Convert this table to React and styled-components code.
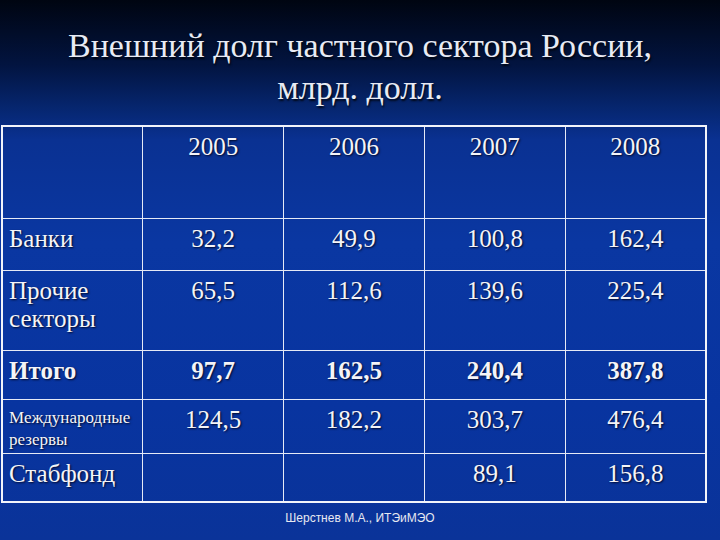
import React from "react";
import styled, { createGlobalStyle } from "styled-components";

const GlobalStyle = createGlobalStyle`
  html, body {
    margin: 0;
    padding: 0;
    width: 720px;
    height: 540px;
    overflow: hidden;
  }
  body {
    font-family: "Liberation Serif", "DejaVu Serif", serif;
    background: linear-gradient(
      180deg,
      #000511 0%,
      #021440 12%,
      #06266f 20%,
      #0a3192 26%,
      #0a37a2 45%,
      #0834a0 75%,
      #0a3399 100%
    );
  }
`;

const Slide = styled.div`
  width: 720px;
  height: 540px;
  display: flex;
  flex-direction: column;
  color: #f4f4f8;
`;

const Title = styled.h1`
  margin: 0;
  height: 125px;
  padding-top: 25px;
  box-sizing: border-box;
  text-align: center;
  font-family: "Liberation Serif", "DejaVu Serif", serif;
  font-size: 34px;
  font-weight: normal;
  line-height: 42px;
  color: #e8ebf4;
  text-shadow: 1px 2px 2px rgba(0, 0, 0, 0.8);
`;

const TableWrap = styled.div`
  padding-left: 1px;
`;

const Table = styled.table`
  width: 706px;
  border-collapse: collapse;
  table-layout: fixed;
  border: 2px solid #f2f4fa;
  font-family: "Liberation Serif", "DejaVu Serif", serif;
`;

const Row = styled.tr`
  height: ${(p) => p.$h}px;
`;

const Cell = styled.td`
  border: 1.5px solid #e6eaf6;
  vertical-align: top;
  padding: ${(p) => (p.$small ? "7px 6px 0" : "6px 6px 0")};
  text-align: ${(p) => (p.$left ? "left" : "center")};
  font-family: "Liberation Serif", "DejaVu Serif", serif;
  font-size: ${(p) => (p.$small ? "17px" : "25px")};
  line-height: ${(p) => (p.$small ? "22px" : "28px")};
  font-weight: ${(p) => (p.$bold ? "bold" : "normal")};
  color: #f4f4f8;
  text-shadow: 1px 1px 2px rgba(0, 0, 20, 0.85);
  white-space: nowrap;
`;

const Footer = styled.div`
  flex: 1;
  display: flex;
  justify-content: center;
  padding-top: 8px;
  font-family: "Liberation Sans", Arial, sans-serif;
  font-size: 12px;
  color: #e6e8f0;
`;

const rows = [
  { label: "Банки", h: 52, vals: ["32,2", "49,9", "100,8", "162,4"] },
  { label: ["Прочие", "секторы"], h: 80, vals: ["65,5", "112,6", "139,6", "225,4"] },
  { label: "Итого", h: 49, bold: true, vals: ["97,7", "162,5", "240,4", "387,8"] },
  { label: ["Международные", "резервы"], h: 54, small: true, vals: ["124,5", "182,2", "303,7", "476,4"] },
  { label: "Стабфонд", h: 49, vals: ["", "", "89,1", "156,8"] },
];

const years = ["2005", "2006", "2007", "2008"];

export default function App() {
  return (
    <>
      <GlobalStyle />
      <Slide>
        <Title>
          Внешний долг частного сектора России,
          <br />
          млрд. долл.
        </Title>
        <TableWrap>
          <Table>
            <tbody>
              <Row $h={92}>
                <Cell $left />
                {years.map((y) => (
                  <Cell key={y}>{y}</Cell>
                ))}
              </Row>
              {rows.map((r, i) => (
                <Row key={i} $h={r.h}>
                  <Cell $left $small={r.small} $bold={r.bold}>
                    {Array.isArray(r.label) ? (
                      <>
                        {r.label[0]}
                        <br />
                        {r.label[1]}
                      </>
                    ) : (
                      r.label
                    )}
                  </Cell>
                  {r.vals.map((v, j) => (
                    <Cell key={j} $bold={r.bold}>
                      {v}
                    </Cell>
                  ))}
                </Row>
              ))}
            </tbody>
          </Table>
        </TableWrap>
        <Footer>Шерстнев М.А., ИТЭиМЭО</Footer>
      </Slide>
    </>
  );
}
